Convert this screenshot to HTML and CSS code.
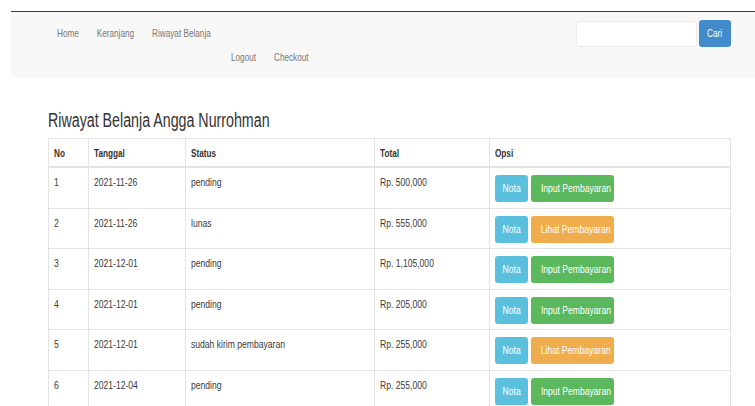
FILE: index.html
```html
<!DOCTYPE html>
<html lang="id">
<head>
<meta charset="utf-8">
<title>Riwayat Belanja</title>
<link rel="stylesheet" href="styles.css">
</head>
<body>
<div class="page">
  <nav class="navbar">
    <div class="nav-links">
      <ul class="nav-row">
        <li><a href="#">Home</a></li>
        <li><a href="#">Keranjang</a></li>
        <li><a href="#">Riwayat Belanja</a></li>
      </ul>
      <ul class="nav-row nav-row-second">
        <li><a href="#">Logout</a></li>
        <li><a href="#">Checkout</a></li>
      </ul>
    </div>
    <form class="search">
      <input class="search-input" type="text">
      <button class="btn btn-primary" type="button"><span class="cond">Cari</span></button>
    </form>
  </nav>

  <main class="content">
    <h3 class="title"><span class="cond-title">Riwayat Belanja Angga Nurrohman</span></h3>
    <table class="table">
      <colgroup>
        <col class="col-no"><col class="col-date"><col class="col-status"><col class="col-total"><col>
      </colgroup>
      <thead>
        <tr>
          <th><span class="cond">No</span></th>
          <th><span class="cond">Tanggal</span></th>
          <th><span class="cond">Status</span></th>
          <th><span class="cond">Total</span></th>
          <th><span class="cond">Opsi</span></th>
        </tr>
      </thead>
      <tbody>
        <tr>
          <td><span class="cond">1</span></td><td><span class="cond">2021-11-26</span></td>
          <td><span class="cond">pending</span></td><td><span class="cond">Rp. 500,000</span></td>
          <td><a class="btn btn-info" href="#"><span class="cond">Nota</span></a><a class="btn btn-success" href="#"><span class="cond">Input Pembayaran</span></a></td>
        </tr>
        <tr>
          <td><span class="cond">2</span></td><td><span class="cond">2021-11-26</span></td>
          <td><span class="cond">lunas</span></td><td><span class="cond">Rp. 555,000</span></td>
          <td><a class="btn btn-info" href="#"><span class="cond">Nota</span></a><a class="btn btn-warning" href="#"><span class="cond">Lihat Pembayaran</span></a></td>
        </tr>
        <tr>
          <td><span class="cond">3</span></td><td><span class="cond">2021-12-01</span></td>
          <td><span class="cond">pending</span></td><td><span class="cond">Rp. 1,105,000</span></td>
          <td><a class="btn btn-info" href="#"><span class="cond">Nota</span></a><a class="btn btn-success" href="#"><span class="cond">Input Pembayaran</span></a></td>
        </tr>
        <tr>
          <td><span class="cond">4</span></td><td><span class="cond">2021-12-01</span></td>
          <td><span class="cond">pending</span></td><td><span class="cond">Rp. 205,000</span></td>
          <td><a class="btn btn-info" href="#"><span class="cond">Nota</span></a><a class="btn btn-success" href="#"><span class="cond">Input Pembayaran</span></a></td>
        </tr>
        <tr>
          <td><span class="cond">5</span></td><td><span class="cond">2021-12-01</span></td>
          <td><span class="cond">sudah kirim pembayaran</span></td><td><span class="cond">Rp. 255,000</span></td>
          <td><a class="btn btn-info" href="#"><span class="cond">Nota</span></a><a class="btn btn-warning" href="#"><span class="cond">Lihat Pembayaran</span></a></td>
        </tr>
        <tr>
          <td><span class="cond">6</span></td><td><span class="cond">2021-12-04</span></td>
          <td><span class="cond">pending</span></td><td><span class="cond">Rp. 255,000</span></td>
          <td><a class="btn btn-info" href="#"><span class="cond">Nota</span></a><a class="btn btn-success" href="#"><span class="cond">Input Pembayaran</span></a></td>
        </tr>
      </tbody>
    </table>
  </main>
</div>
</body>
</html>
```

FILE: styles.css
```css
* { box-sizing: border-box; }

html, body {
  margin: 0;
  background: #fff;
  color: #3a3a3a;
  font-family: "Liberation Sans", Arial, Helvetica, sans-serif;
  font-size: 11px;
  line-height: 15px;
  overflow: hidden;
}

/* narrow lettering used throughout the page */
.cond {
  display: inline-block;
  white-space: nowrap;
  transform: scaleX(0.78);
  transform-origin: 0 50%;
}

.cond-title {
  display: inline-block;
  white-space: nowrap;
  transform: scaleX(0.73);
  transform-origin: 0 50%;
}

.page {
  padding: 11px 0 0 11px;
}

/* top navigation bar */
.navbar {
  display: flex;
  align-items: flex-start;
  height: 67px;
  padding: 8px 21px 0 37px;
  background: #f8f8f8;
  border-top: 1px solid #3a3a3a;
  border-bottom-left-radius: 4px;
}

.nav-links {
  display: flex;
  flex-direction: column;
  padding-top: 1px;
}

.nav-row {
  display: flex;
  margin: 0;
  padding: 0;
  list-style: none;
  font-size: 10.5px;
  transform: scaleX(0.78);
  transform-origin: 0 50%;
}

.nav-row li a {
  display: block;
  padding: 6px 11.5px;
  line-height: 12px;
  color: #777;
  text-decoration: none;
}

.nav-row-second {
  margin-left: 174px;
}

.search {
  display: flex;
  align-items: center;
  gap: 2px;
  margin-left: auto;
}

.search-input {
  width: 121px;
  height: 26px;
  margin: 0;
  padding: 0 6px;
  border: 1px solid #ececec;
  border-radius: 3px;
  background: #fff;
  font: inherit;
}

.search .btn {
  height: 27px;
  width: 32px;
  padding: 0;
  border: 0;
  border-radius: 3px;
  font: inherit;
  font-size: 10.5px;
  color: #fff;
}

/* page content */
.content {
  padding: 32px 24px 0 37px;
}

.title {
  margin: 0 0 8px;
  font-size: 19.5px;
  line-height: 20px;
  font-weight: normal;
  color: #333;
}

.table {
  width: 683px;
  border-collapse: collapse;
  table-layout: fixed;
  border: 1px solid #e3e3e3;
}

.col-no { width: 40px; }
.col-date { width: 97px; }
.col-status { width: 189px; }
.col-total { width: 115px; }

.table th,
.table td {
  border: 1px solid #e3e3e3;
  text-align: left;
  vertical-align: top;
  white-space: nowrap;
}

.table th {
  padding: 7px 5px 5px;
  font-size: 10.5px;
  font-weight: bold;
  color: #333;
  border-bottom: 2px solid #e3e3e3;
}

.table td {
  padding: 7px 5px 5.6px;
}

.btn {
  display: inline-block;
  vertical-align: top;
  height: 27px;
  line-height: 27px;
  padding: 0;
  margin-right: 3px;
  border-radius: 3px;
  color: #fff;
  text-decoration: none;
  text-align: center;
}

.btn .cond {
  transform-origin: 50% 50%;
}

.btn-primary { background: #428bca; }
.btn-info { background: #5bc0de; width: 33px; }
.btn-success { background: #5cb85c; width: 83px; }
.btn-warning { background: #f0ad4e; width: 83px; }
```
